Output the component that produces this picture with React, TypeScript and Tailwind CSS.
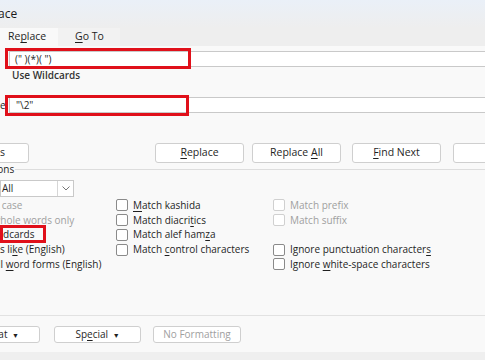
import React from "react";

const U = ({ children }: { children: React.ReactNode }) => (
  <span className="underline underline-offset-2">{children}</span>
);

const Box = ({ faded = false }: { faded?: boolean }) => (
  <span
    className={`inline-block w-[12px] h-[12px] rounded-[2px] border bg-white shrink-0 ${
      faded ? "border-[#d0d0d0]" : "border-[#8a8a8a]"
    }`}
  />
);

const Row = ({
  children,
  faded = false,
  empty = false,
}: {
  children?: React.ReactNode;
  faded?: boolean;
  empty?: boolean;
}) => (
  <div className="h-[14.75px] flex items-center gap-[5px] whitespace-nowrap">
    {!empty && <Box faded={faded} />}
    <span className={faded ? "text-[#a0a0a0]" : "text-[#1f1f1f]"}>{children}</span>
  </div>
);

const Btn = ({
  children,
  className = "",
  end = false,
}: {
  children: React.ReactNode;
  className?: string;
  end?: boolean;
}) => (
  <div
    className={`flex items-center bg-white border border-[#cfcfcf] rounded-[3px] whitespace-nowrap shrink-0 ${
      end ? "justify-end" : "justify-center"
    } ${className}`}
  >
    <span>{children}</span>
  </div>
);

const App = () => {
  return (
    <div
      className="w-[485px] h-[360px] overflow-hidden bg-[#f9f9f9] text-[10px] relative"
      style={{ fontFamily: "'Open Sans', 'Noto Sans', sans-serif" }}
    >
      {/* title bar */}
      <div className="h-[28px] bg-gradient-to-b from-[#eaf0f8] to-[#eeeeee] flex items-center whitespace-nowrap">
        <span className="ml-[-78px] text-[12px] text-[#1a1a1a]">Find and Replace</span>
      </div>

      {/* tabs */}
      <div className="h-[18px] bg-[#eeeeee] flex text-[10.5px]">
        <div className="w-[58px] bg-[#f9f9f9] flex items-center pl-[8px] text-[#1f1f1f]">
          <span>
            Re<U>p</U>lace
          </span>
        </div>
        <div className="w-[62px] bg-[#f2f2f2] flex items-center pl-[17px] text-[#1f1f1f]">
          <span>
            <U>G</U>o To
          </span>
        </div>
      </div>

      {/* find */}
      <div className="relative pt-[5px]">
        <div className="ml-[9px] h-[16px] bg-white border-y border-l border-[#c9c9c9] flex items-center pl-[5px] text-[#1f1f1f]">
          (" )(*)( ")
        </div>
        <div className="absolute left-[5px] top-[2px] w-[186px] h-[21px] border-[3px] border-[#e0101a]" />
      </div>
      <div className="pl-[12px] pt-[1px] h-[22px] font-semibold text-[#333]">Use Wildcards</div>

      {/* replace */}
      <div className="relative mt-[8px] flex items-center">
        <span className="w-[9px] text-[#1f1f1f] overflow-hidden">e:</span>
        <div className="flex-1 h-[16px] bg-white border-y border-l border-[#c9c9c9] flex items-center pl-[6px] text-[#1f1f1f]">
          "\2"
        </div>
        <div className="absolute left-[5px] top-[-2px] w-[184px] h-[21px] border-[3px] border-[#e0101a]" />
      </div>

      {/* buttons */}
      <div className="mt-[30px] flex items-center text-[10.5px] text-[#1f1f1f]">
        <Btn end className="w-[70px] h-[20px] ml-[-41px] pr-[23px]">
          &lt;&lt; Less
        </Btn>
        <Btn className="w-[89px] h-[20px] ml-[126px]">
          <U>R</U>eplace
        </Btn>
        <Btn className="w-[89px] h-[20px] ml-[8px]">
          Replace <U>A</U>ll
        </Btn>
        <Btn className="w-[89px] h-[20px] ml-[11px] border-[#5b8fd3] border-[1.5px]">
          <U>F</U>ind Next
        </Btn>
        <Btn className="w-[40px] h-[20px] ml-[12px]">&nbsp;</Btn>
      </div>

      {/* search options */}
      <div className="mt-[1px] flex items-center h-[10px] whitespace-nowrap">
        <span className="ml-[-57px] text-[#1f1f1f]">Search Options</span>
        <div className="flex-1 h-px bg-[#dddddd] ml-[1px]" />
      </div>

      <div className="mt-[6px] flex items-center">
        <div className="w-[74px] h-[17px] bg-white border border-[#c9c9c9] flex">
          <span className="flex-1 flex items-center pl-[1px] text-[#1f1f1f]">All</span>
          <span className="w-[16px] border-l border-[#d6d6d6] flex items-center justify-center">
            <svg width="8" height="5" viewBox="0 0 8 5">
              <path d="M0.5 0.5 L4 4 L7.5 0.5" fill="none" stroke="#777" strokeWidth="1" />
            </svg>
          </span>
        </div>
      </div>

      <div className="mt-[1px] ml-[-47px] grid grid-cols-[163px_157px_1fr]">
        <div className="flex flex-col">
          <Row faded>Match case</Row>
          <Row faded>Find whole words only</Row>
          <div className="relative">
            <Row>Use wildcards</Row>
            <div className="absolute left-[47px] top-[-3px] w-[46px] h-[18px] border-[3px] border-[#e0101a]" />
          </div>
          <Row>
            Sounds li<U>k</U>e (English)
          </Row>
          <Row>
            Find all <U>w</U>ord forms (English)
          </Row>
        </div>
        <div className="flex flex-col">
          <Row>
            <U>M</U>atch kashida
          </Row>
          <Row>
            Match diacri<U>t</U>ics
          </Row>
          <Row>
            Match alef ham<U>z</U>a
          </Row>
          <Row>
            Match <U>c</U>ontrol characters
          </Row>
        </div>
        <div className="flex flex-col">
          <Row faded>Match prefix</Row>
          <Row faded>Match suffix</Row>
          <Row empty />
          <Row>
            Ignore punctuation character<U>s</U>
          </Row>
          <Row>
            Ignore <U>w</U>hite-space characters
          </Row>
        </div>
      </div>

      {/* bottom */}
      <div className="mt-[43px] h-px bg-[#e2e2e2]" />
      <div className="mt-[10px] flex items-center text-[#1f1f1f]">
        <Btn end className="w-[72px] h-[17px] ml-[-32px] pr-[20px]">
          Format <span className="ml-[2px] text-[7px]">▼</span>
        </Btn>
        <Btn className="w-[87px] h-[17px] ml-[14px]">
          Sp<U>e</U>cial <span className="ml-[2px] text-[7px]">▼</span>
        </Btn>
        <Btn className="w-[88px] h-[17px] ml-[12px] text-[#a0a0a0]">No Formatting</Btn>
      </div>
      <div className="absolute left-0 right-0 bottom-0 h-[8px] bg-[#efefef]" />
    </div>
  );
};

export default App;
